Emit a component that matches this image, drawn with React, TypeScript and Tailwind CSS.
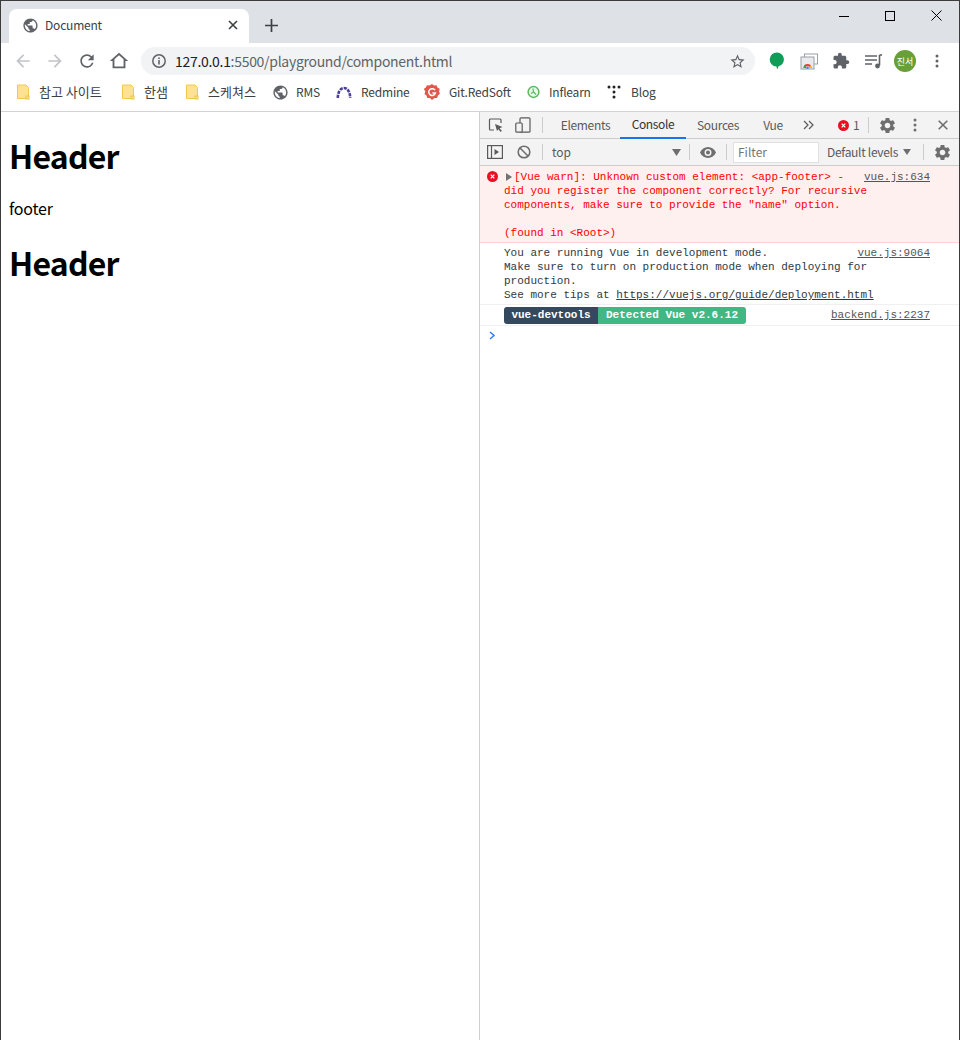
import React from "react";

const UI = "font-['Noto_Sans_CJK_KR','Noto_Sans',sans-serif]";
const GLOBE = "M12 2C6.48 2 2 6.48 2 12s4.48 10 10 10 10-4.48 10-10S17.52 2 12 2zm-1 17.93c-3.95-.49-7-3.85-7-7.93 0-.62.08-1.21.21-1.79L9 15v1c0 1.1.9 2 2 2v1.93zm6.9-2.54c-.26-.81-1-1.39-1.9-1.39h-1v-3c0-.55-.45-1-1-1H8v-2h2c.55 0 1-.45 1-1V7h2c1.1 0 2-.9 2-2v-.41c2.93 1.19 5 4.06 5 7.41 0 2.08-.8 3.97-2.1 5.39z";
const GEAR = "M19.14 12.94c.04-.3.06-.61.06-.94 0-.32-.02-.64-.07-.94l2.03-1.58a.49.49 0 0 0 .12-.61l-1.92-3.32a.488.488 0 0 0-.59-.22l-2.39.96c-.5-.38-1.03-.7-1.62-.94l-.36-2.54a.484.484 0 0 0-.48-.41h-3.84c-.24 0-.43.17-.47.41l-.36 2.54c-.59.24-1.13.57-1.62.94l-2.39-.96c-.22-.08-.47 0-.59.22L2.74 8.87c-.12.21-.08.47.12.61l2.03 1.58c-.05.3-.09.63-.09.94s.02.64.07.94l-2.03 1.58a.49.49 0 0 0-.12.61l1.92 3.32c.12.22.37.29.59.22l2.39-.96c.5.38 1.03.7 1.62.94l.36 2.54c.05.24.24.41.48.41h3.84c.24 0 .44-.17.47-.41l.36-2.54c.59-.24 1.13-.56 1.62-.94l2.39.96c.22.08.47 0 .59-.22l1.92-3.32c.12-.22.07-.47-.12-.61l-2.01-1.58zM12 15.6c-1.98 0-3.6-1.62-3.6-3.6s1.62-3.6 3.6-3.6 3.6 1.62 3.6 3.6-1.62 3.6-3.6 3.6z";

function Icon({ d, size = 16, color = "#5f6368" }: { d: string; size?: number; color?: string }) {
  return (
    <svg width={size} height={size} viewBox="0 0 24 24" fill={color} className="block shrink-0">
      <path d={d} />
    </svg>
  );
}

function Folder() {
  return (
    <svg width="14" height="16" viewBox="0 0 14 16" className="block shrink-0">
      <path d="M1.5 1h8.5l2.5 2.5V14.5h-11z" fill="#fde293" stroke="#f2c94c" strokeWidth="1" />
      <rect x="10" y="12" width="3" height="3" fill="#fde293" stroke="#e9c349" strokeWidth="1" />
    </svg>
  );
}

function Bookmark({ w, icon, label, gap, kr }: { w: string; icon: React.ReactNode; label: string; gap: string; kr?: boolean }) {
  return (
    <div className={`flex items-center shrink-0 ${w} ${gap}`}>
      {icon}
      <span className={kr ? "text-[13px] leading-[16px] text-[#3c4043] whitespace-nowrap" : "text-[12px] leading-[16px] tracking-[-0.2px] text-[#3c4043] whitespace-nowrap"}>{label}</span>
    </div>
  );
}

function ToolbarBtn({ children, w = "w-[32px]" }: { children: React.ReactNode; w?: string }) {
  return <div className={`flex items-center justify-center shrink-0 ${w}`}>{children}</div>;
}

function Sep() {
  return <div className="w-px h-[16px] bg-[#cccccc] shrink-0" />;
}

function Source({ children }: { children: React.ReactNode }) {
  return <span className="underline text-[#545454] whitespace-nowrap">{children}</span>;
}

export default function App() {
  return (
    <div className={`w-[960px] h-[1040px] flex flex-col bg-white border-x border-t border-[#3c3c3c] overflow-hidden ${UI}`}>
      {/* Tab strip */}
      <div className="h-[42px] shrink-0 bg-[#dee1e6] flex pl-[8px] relative">
        <div className="mt-[8px] w-[240px] h-[34px] bg-white rounded-t-[8px] flex items-center pl-[13px] pr-[11px] pb-[2px]">
          <Icon d={GLOBE} size={17} />
          <span className="ml-[6px] text-[12px] leading-[16px] tracking-[-0.2px] text-[#3c4043] flex-1">Document</span>
          <svg width="10" height="10" viewBox="0 0 10 10" className="block"><path d="M1 1l8 8M9 1l-8 8" stroke="#3c4043" strokeWidth="1.6" /></svg>
        </div>
        <div className="mt-[8px] ml-[16px] h-[34px] pb-[1px] flex items-center">
          <svg width="13" height="13" viewBox="0 0 13 13" className="block"><path d="M6.5 0v13M0 6.5h13" stroke="#3c4043" strokeWidth="1.7" /></svg>
        </div>
        <div className="ml-auto flex items-start">
          <div className="w-[46px] h-[29px] flex items-center justify-center">
            <svg width="10" height="10" viewBox="0 0 10 10" className="block"><path d="M0 5.5h10" stroke="#000" strokeWidth="1" /></svg>
          </div>
          <div className="w-[46px] h-[29px] flex items-center justify-center">
            <svg width="10" height="10" viewBox="0 0 10 10" className="block"><rect x=".5" y=".5" width="9" height="9" fill="none" stroke="#000" /></svg>
          </div>
          <div className="w-[46px] h-[29px] flex items-center justify-center">
            <svg width="11" height="11" viewBox="0 0 11 11" className="block"><path d="M.5.5l10 10M10.5.5l-10 10" stroke="#000" strokeWidth="1" /></svg>
          </div>
        </div>
      </div>

      {/* Toolbar */}
      <div className="h-[37px] shrink-0 bg-white flex items-center pl-[6px] pr-[6px] pb-[1px]">
        <ToolbarBtn><Icon d="M20 11H7.83l5.59-5.59L12 4l-8 8 8 8 1.41-1.41L7.83 13H20v-2z" size={20} color="#c1c4c9" /></ToolbarBtn>
        <ToolbarBtn><Icon d="M12 4l-1.41 1.41L16.17 11H4v2h12.17l-5.58 5.59L12 20l8-8z" size={20} color="#c1c4c9" /></ToolbarBtn>
        <ToolbarBtn><Icon d="M17.65 6.35A7.958 7.958 0 0 0 12 4c-4.42 0-7.99 3.58-7.99 8s3.57 8 7.99 8c3.73 0 6.84-2.55 7.73-6h-2.08A5.99 5.99 0 0 1 12 18c-3.31 0-6-2.69-6-6s2.69-6 6-6c1.66 0 3.14.69 4.22 1.78L13 11h7V4l-2.35 2.35z" size={20} /></ToolbarBtn>
        <ToolbarBtn><Icon d="M12 5.69l5 4.5V18H7v-7.81l5-4.5M12 3L2 12h3v8h14v-8h3L12 3z" size={22} /></ToolbarBtn>
        <div className="ml-[6px] w-[614px] h-[28px] rounded-[14px] bg-[#f1f3f4] flex items-center shrink-0 pl-[10px] pr-[9px]">
          <svg width="16" height="16" viewBox="0 0 16 16" className="block shrink-0">
            <circle cx="8" cy="8" r="6.2" fill="none" stroke="#5f6368" strokeWidth="1.5" />
            <path d="M8 7v4.5" stroke="#5f6368" strokeWidth="1.6" />
            <path d="M8 4.4v1.6" stroke="#5f6368" strokeWidth="1.6" />
          </svg>
          <span className="ml-[8px] text-[14px] leading-[20px] tracking-[-0.3px] text-[#5f6368] flex-1 whitespace-nowrap">
            <span className="text-[#202124]">127.0.0.1</span>:5500/playground/component.html
          </span>
          <Icon d="M22 9.24l-7.19-.62L12 2 9.19 8.63 2 9.24l5.46 4.73L5.82 21 12 17.27 18.18 21l-1.63-7.03L22 9.24zM12 15.4l-3.76 2.27 1-4.28-3.32-2.88 4.38-.38L12 6.1l1.71 4.04 4.38.38-3.32 2.88 1 4.28L12 15.4z" size={17} />
        </div>
        <div className="ml-[6px] flex items-center">
          <ToolbarBtn>
            <svg width="16" height="18" viewBox="0 0 16 18" className="block">
              <path d="M8 .5a7 7 0 0 1 1.6 13.8L8.2 17.5 7.4 14.5A7 7 0 0 1 8 .5z" fill="#0f9d58" />
            </svg>
          </ToolbarBtn>
          <ToolbarBtn>
            <svg width="18" height="17" viewBox="0 0 18 17" className="block">
              <rect x="4.5" y="1" width="13" height="10" fill="#fff" stroke="#9aa0a6" />
              <rect x="1" y="4" width="13" height="12" fill="#e8eaed" stroke="#9aa0a6" />
              <path d="M3.5 15a4 4 0 0 1 8 0h-2a2 2 0 0 0-4 0z" fill="#ea4335" />
              <path d="M3.5 15a4 4 0 0 1 1-2.6L6 14v1z" fill="#34a853" />
              <path d="M11.5 15a4 4 0 0 0-.8-2.4L9 14v1z" fill="#fbbc04" />
              <circle cx="7.5" cy="14.7" r="1.3" fill="#4285f4" />
            </svg>
          </ToolbarBtn>
          <ToolbarBtn><Icon d="M20.5 11H19V7c0-1.1-.9-2-2-2h-4V3.5C13 2.12 11.88 1 10.5 1S8 2.12 8 3.5V5H4c-1.1 0-1.99.9-1.99 2v3.8H3.5c1.49 0 2.7 1.21 2.7 2.7s-1.21 2.7-2.7 2.7H2V20c0 1.1.9 2 2 2h3.8v-1.5c0-1.49 1.21-2.7 2.7-2.7 1.49 0 2.7 1.21 2.7 2.7V22H17c1.1 0 2-.9 2-2v-4h1.5c1.38 0 2.5-1.12 2.5-2.5S21.88 11 20.5 11z" size={18} /></ToolbarBtn>
          <ToolbarBtn>
            <svg width="17" height="15" viewBox="0 0 17 15" className="block">
              <path d="M0 2h12M0 6h12M0 10h7" stroke="#5f6368" strokeWidth="1.4" />
              <path d="M14.5 1v10.5" stroke="#5f6368" strokeWidth="1.6" />
              <path d="M14.5 1h2.5" stroke="#5f6368" strokeWidth="1.6" />
              <circle cx="12.5" cy="12" r="2.4" fill="#5f6368" />
            </svg>
          </ToolbarBtn>
          <ToolbarBtn>
            <div className="w-[22px] h-[22px] rounded-full bg-[#689f38] flex items-center justify-center text-[9px] leading-none text-white">진서</div>
          </ToolbarBtn>
          <ToolbarBtn>
            <svg width="4" height="14" viewBox="0 0 4 14" className="block">
              <circle cx="2" cy="2" r="1.5" fill="#5f6368" />
              <circle cx="2" cy="7" r="1.5" fill="#5f6368" />
              <circle cx="2" cy="12" r="1.5" fill="#5f6368" />
            </svg>
          </ToolbarBtn>
        </div>
      </div>

      {/* Bookmarks */}
      <div className="h-[32px] shrink-0 bg-white flex items-center pl-[15px] pb-[7px] border-b border-[#d3d3d3]">
        <Bookmark w="w-[105px]" gap="gap-[9px]" kr icon={<Folder />} label="참고 사이트" />
        <Bookmark w="w-[64px]" gap="gap-[9px]" kr icon={<Folder />} label="한샘" />
        <Bookmark w="w-[87px]" gap="gap-[9px]" kr icon={<Folder />} label="스케쳐스" />
        <Bookmark w="w-[64px]" gap="gap-[7px]" icon={<Icon d={GLOBE} size={17} />} label="RMS" />
        <Bookmark
          w="w-[88px]"
          gap="gap-[9px]"
          icon={
            <svg width="16" height="13" viewBox="0 0 16 13" className="block shrink-0">
              <path d="M1.8 12C1.8 6 4.5 2 8 2s6.2 4 6.2 10" fill="none" stroke="#4b3f98" strokeWidth="2.6" strokeDasharray="3.2 1" />
            </svg>
          }
          label="Redmine"
        />
        <Bookmark
          w="w-[103px]"
          gap="gap-[9px]"
          icon={
            <svg width="16" height="16" viewBox="0 0 16 16" className="block shrink-0">
              <path d="M8 0l2 1.6 2.5-.4 1 2.4 2.2 1.2-.6 2.6.8 2.4-2 1.6-.8 2.5-2.6.1L8 16l-2.1-1.9-2.6-.1-.8-2.5-2-1.6.8-2.4L-.3 4.8l2.2-1.2 1-2.4L5.4 1.6z" fill="#e2574c" />
              <path d="M11 6.2A3.4 3.4 0 1 0 11.4 9H8.4" fill="none" stroke="#fff" strokeWidth="1.5" />
            </svg>
          }
          label="Git.RedSoft"
        />
        <Bookmark
          w="w-[80px]"
          gap="gap-[9px]"
          icon={
            <svg width="13" height="14" viewBox="0 0 13 14" className="block shrink-0">
              <circle cx="6.5" cy="7" r="5.4" fill="#e9f7ea" stroke="#5cb85c" strokeWidth="1.5" />
              <path d="M6 3.5L6.5 7l2.5 2.5M6.5 7L4 8.5" fill="none" stroke="#5cb85c" strokeWidth="1.2" />
            </svg>
          }
          label="Inflearn"
        />
        <Bookmark
          w="w-[80px]"
          gap="gap-[10px]"
          icon={
            <svg width="14" height="14" viewBox="0 0 14 14" className="block shrink-0">
              <circle cx="2" cy="2" r="1.5" fill="#222" />
              <circle cx="7" cy="2" r="1.5" fill="#222" />
              <circle cx="12" cy="2" r="1.5" fill="#222" />
              <circle cx="7" cy="7" r="1.5" fill="#222" />
              <circle cx="7" cy="12" r="1.5" fill="#222" />
            </svg>
          }
          label="Blog"
        />
      </div>

      {/* Content */}
      <div className="flex-1 flex min-h-0">
        <div className="w-[478px] shrink-0 bg-white pl-[8px] text-black">
          <h1 className="mt-[22px] text-[32px] leading-[43px] tracking-[-0.8px] font-bold">Header</h1>
          <p className="mt-[21px] text-[16px] leading-[21px] tracking-[-0.2px]">footer</p>
          <h1 className="mt-[22px] text-[32px] leading-[43px] tracking-[-0.8px] font-bold">Header</h1>
        </div>

        <div className="flex-1 flex flex-col border-l border-[#d0d0d0] min-w-0">
          {/* Devtools tabs */}
          <div className="h-[27px] shrink-0 bg-[#f3f3f3] border-b border-[#cccccc] flex items-center text-[12px] leading-[16px] tracking-[-0.35px] text-[#5a5a5a]">
            <div className="w-[28px] flex justify-center ml-[2px] shrink-0">
              <svg width="16" height="16" viewBox="0 0 16 16" className="block">
                <path d="M6 13H2.5a1 1 0 0 1-1-1V3a1 1 0 0 1 1-1h9.5a1 1 0 0 1 1 1v3" fill="none" stroke="#5a5a5a" strokeWidth="1.2" />
                <path d="M7 7l7.5 3-3 1.2 2.4 2.6-1.2 1.1-2.3-2.6L9 14z" fill="#5a5a5a" />
              </svg>
            </div>
            <div className="w-[26px] flex justify-center shrink-0">
              <svg width="16" height="16" viewBox="0 0 16 16" className="block">
                <rect x="5" y=".8" width="10" height="14.4" rx="1" fill="none" stroke="#5a5a5a" strokeWidth="1.2" />
                <rect x=".8" y="6" width="6.4" height="9.2" rx="1" fill="#f3f3f3" stroke="#5a5a5a" strokeWidth="1.2" />
              </svg>
            </div>
            <div className="ml-[6px]"><Sep /></div>
            <div className="w-[69px] ml-[8px] h-full flex items-center justify-center shrink-0">Elements</div>
            <div className="w-[66px] h-[27px] flex items-center justify-center text-[#333333] border-b-2 border-[#1a73e8] shrink-0">Console</div>
            <div className="w-[64px] flex justify-center shrink-0">Sources</div>
            <div className="w-[46px] flex justify-center shrink-0">Vue</div>
            <div className="w-[24px] flex justify-center shrink-0">
              <svg width="11" height="10" viewBox="0 0 11 10" className="block">
                <path d="M1 1l4 4-4 4M6 1l4 4-4 4" fill="none" stroke="#5a5a5a" strokeWidth="1.2" />
              </svg>
            </div>
            <div className="ml-[18px] flex items-center gap-[4px] shrink-0 w-[20px]">
              <svg width="11" height="11" viewBox="0 0 11 11" className="block shrink-0">
                <circle cx="5.5" cy="5.5" r="5.5" fill="#e81123" />
                <path d="M3.7 3.7l3.6 3.6M7.3 3.7L3.7 7.3" stroke="#fff" strokeWidth="1.2" />
              </svg>
              <span>1</span>
            </div>
            <div className="ml-[10px] shrink-0"><Sep /></div>
            <div className="w-[36px] flex justify-center shrink-0"><Icon d={GEAR} size={19} color="#6e6e6e" /></div>
            <div className="w-[20px] flex justify-center shrink-0">
              <svg width="4" height="14" viewBox="0 0 4 14" className="block">
                <circle cx="2" cy="2" r="1.5" fill="#6e6e6e" />
                <circle cx="2" cy="7" r="1.5" fill="#6e6e6e" />
                <circle cx="2" cy="12" r="1.5" fill="#6e6e6e" />
              </svg>
            </div>
            <div className="w-[34px] pl-[1px] flex justify-center shrink-0">
              <svg width="10" height="10" viewBox="0 0 10 10" className="block"><path d="M.7.7l8.6 8.6M9.3.7L.7 9.3" stroke="#6e6e6e" strokeWidth="1.6" /></svg>
            </div>
          </div>

          {/* Console toolbar */}
          <div className="h-[27px] shrink-0 bg-[#f3f3f3] border-b border-[#cccccc] flex items-center text-[12px] leading-[16px] text-[#5a5a5a]">
            <div className="w-[30px] flex justify-center shrink-0">
              <svg width="16" height="14" viewBox="0 0 16 14" className="block">
                <rect x=".6" y=".6" width="14.8" height="12.8" fill="none" stroke="#5a5a5a" strokeWidth="1.2" />
                <path d="M4.5 1v12" stroke="#5a5a5a" strokeWidth="1.2" />
                <path d="M7.5 4l4.5 3-4.5 3z" fill="#5a5a5a" />
              </svg>
            </div>
            <div className="w-[28px] flex justify-center shrink-0">
              <svg width="14" height="14" viewBox="0 0 14 14" className="block">
                <circle cx="7" cy="7" r="5.8" fill="none" stroke="#6e6e6e" strokeWidth="1.6" />
                <path d="M3 3l8 8" stroke="#6e6e6e" strokeWidth="1.6" />
              </svg>
            </div>
            <div className="ml-[4px]"><Sep /></div>
            <div className="w-[134px] ml-[9px] flex items-center justify-between shrink-0 pr-[5px]">
              <span>top</span>
              <svg width="9" height="7" viewBox="0 0 9 7" className="block"><path d="M0 0h9L4.5 7z" fill="#6e6e6e" /></svg>
            </div>
            <div className="ml-[3px]"><Sep /></div>
            <div className="w-[36px] flex justify-center shrink-0">
              <svg width="16" height="11" viewBox="0 0 16 11" className="block">
                <path d="M8 0C4.5 0 1.5 2.2 0 5.5 1.5 8.8 4.5 11 8 11s6.5-2.2 8-5.5C14.5 2.2 11.5 0 8 0zm0 9a3.5 3.5 0 1 1 0-7 3.5 3.5 0 0 1 0 7zm0-5.5a2 2 0 1 0 0 4 2 2 0 0 0 0-4z" fill="#6e6e6e" />
              </svg>
            </div>
            <Sep />
            <div className="ml-[6px] w-[86px] h-[21px] bg-white border border-[#e0e0e0] shrink-0 flex items-center pl-[4px] text-[#757575]">Filter</div>
            <div className="ml-[8px] flex items-center gap-[5px] shrink-0 w-[96px] tracking-[-0.3px]">
              <span>Default levels</span>
              <svg width="8" height="6" viewBox="0 0 8 6" className="block"><path d="M0 0h8L4 6z" fill="#6e6e6e" /></svg>
            </div>
            <Sep />
            <div className="w-[36px] flex justify-center shrink-0"><Icon d={GEAR} size={19} color="#6e6e6e" /></div>
          </div>

          {/* Messages */}
          <div className="flex-1 bg-white font-['Liberation_Mono',monospace] text-[11px] leading-[14px]">
            <div className="bg-[#fff0f0] border-b border-[#ffd6d6] pt-[4px] pb-[2px] flex items-start text-[#ff0000]">
              <div className="w-[24px] pl-[7px] pt-[1px] shrink-0">
                <svg width="11" height="11" viewBox="0 0 11 11" className="block">
                  <circle cx="5.5" cy="5.5" r="5.5" fill="#e81123" />
                  <path d="M3.7 3.7l3.6 3.6M7.3 3.7L3.7 7.3" stroke="#fff" strokeWidth="1.2" />
                </svg>
              </div>
              <div className="flex-1 min-w-0 relative whitespace-pre">
                <div className="flex">
                  <span className="w-[10px] flex items-center pl-[2px] shrink-0">
                    <svg width="6" height="8" viewBox="0 0 6 8" className="block"><path d="M0 0l6 4-6 4z" fill="#727272" /></svg>
                  </span>
                  <span>[Vue warn]: Unknown custom element: &lt;app-footer&gt; -</span>
                  <span className="ml-auto mr-[29px]"><Source>vue.js:634</Source></span>
                </div>
                <div>did you register the component correctly? For recursive</div>
                <div>components, make sure to provide the "name" option.</div>
                <div className="h-[14px]" />
                <div>(found in &lt;Root&gt;)</div>
              </div>
            </div>

            <div className="border-b border-[#f0f0f0] pl-[24px] pr-[29px] pt-[3px] pb-[2px] text-[#303942] whitespace-pre">
              <div className="flex justify-between">
                <span>You are running Vue in development mode.</span>
                <Source>vue.js:9064</Source>
              </div>
              <div>Make sure to turn on production mode when deploying for</div>
              <div>production.</div>
              <div>See more tips at <span className="underline">https://vuejs.org/guide/deployment.html</span></div>
            </div>

            <div className="h-[21px] border-b border-[#f0f0f0] pl-[24px] pr-[29px] flex items-center justify-between whitespace-pre">
              <div className="flex items-center h-[17px] font-bold">
                <span className="h-[17px] w-[94px] justify-center bg-[#35495e] text-white rounded-l-[3px] flex items-center">vue-devtools</span>
                <span className="h-[17px] w-[148px] justify-center bg-[#41b883] text-white rounded-r-[3px] flex items-center">Detected Vue v2.6.12</span>
              </div>
              <Source>backend.js:2237</Source>
            </div>

            <div className="pl-[9px] pt-[5px]">
              <svg width="7" height="9" viewBox="0 0 7 9" className="block"><path d="M1 1l4 3.5L1 8" fill="none" stroke="#367cf1" strokeWidth="1.5" /></svg>
            </div>
          </div>
        </div>
      </div>
    </div>
  );
}
